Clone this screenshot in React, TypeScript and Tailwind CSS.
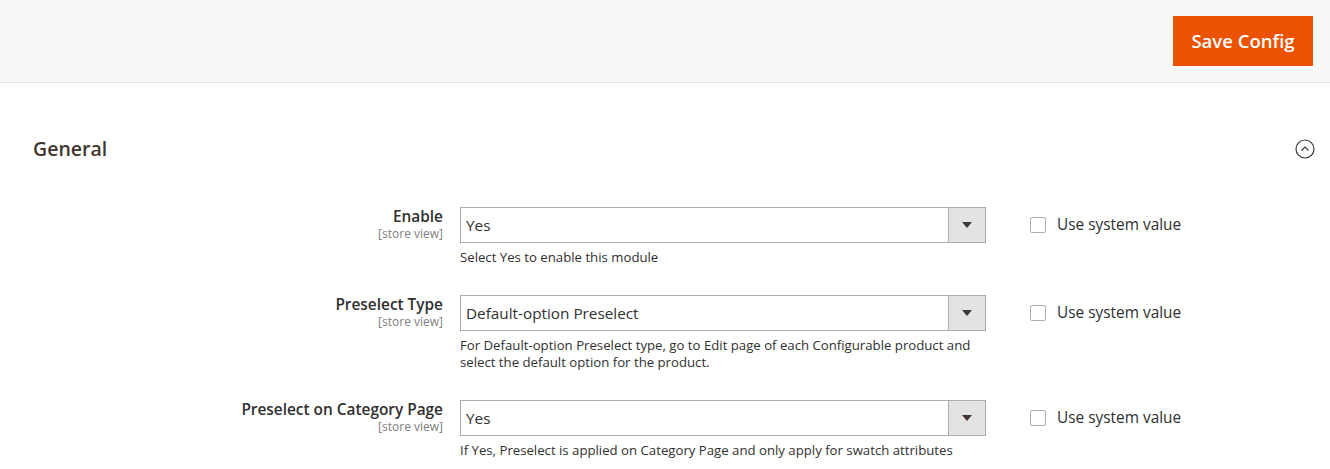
import React from 'react';

type Row = {
  label: string;
  value: string;
  note: string[];
};

const rows: Row[] = [
  { label: 'Enable', value: 'Yes', note: ['Select Yes to enable this module'] },
  {
    label: 'Preselect Type',
    value: 'Default-option Preselect',
    note: [
      'For Default-option Preselect type, go to Edit page of each Configurable product and',
      'select the default option for the product.',
    ],
  },
  {
    label: 'Preselect on Category Page',
    value: 'Yes',
    note: ['If Yes, Preselect is applied on Category Page and only apply for swatch attributes'],
  },
];

const ConfigRow: React.FC<{ row: Row }> = ({ row }) => (
  <div className="flex items-start mb-[29px]">
    <div className="w-[443px] shrink-0 text-right">
      <div className="text-[15.4px] font-semibold text-[#303030] leading-[20px]">{row.label}</div>
      <div className="text-[12px] text-[#808080] leading-[13px]">[store view]</div>
    </div>
    <div className="ml-[17px] w-[526px] shrink-0">
      <div className="flex h-[36px] border border-[#adadad] bg-white">
        <div className="flex-1 flex items-center pl-[5px] text-[15.3px] text-[#303030]">{row.value}</div>
        <div className="w-[37px] border-l border-[#adadad] bg-[#e3e3e3] flex items-center justify-center">
          <svg width="10" height="6" viewBox="0 0 10 6">
            <path d="M0 0 L10 0 L5 6 Z" fill="#41362f" />
          </svg>
        </div>
      </div>
      <div className="mt-[6px] text-[13.2px] leading-[17px] text-[#303030]">
        {row.note.map((n) => (
          <div key={n}>{n}</div>
        ))}
      </div>
    </div>
    <label className="ml-[44px] mt-[9px] flex items-center">
      <span className="w-[16px] h-[16px] border border-[#adadad] rounded-[2px] bg-white" />
      <span className="ml-[11px] text-[15.4px] text-[#303030] leading-[18px]">Use system value</span>
    </label>
  </div>
);

const App: React.FC = () => {
  return (
    <div className="min-h-[469px] bg-white" style={{ fontFamily: '"Open Sans", "Noto Sans", sans-serif' }}>
      <div className="h-[83px] bg-[#f8f8f8] border-b border-[#e3e3e3] flex items-start justify-end pr-[17px] pt-[16px]">
        <button className="w-[140px] h-[50px] bg-[#eb5202] text-white text-[18.5px] font-semibold">Save Config</button>
      </div>
      <div className="flex items-center justify-between pl-[33px] pr-[15px] mt-[51px] h-[30px]">
        <h2 className="text-[19.5px] font-semibold text-[#41362f]">General</h2>
        <svg width="20" height="20" viewBox="0 0 20 20">
          <circle cx="10" cy="10" r="9" fill="none" stroke="#41362f" strokeWidth="1.2" />
          <path d="M6.5 11.5 L10 8 L13.5 11.5" fill="none" stroke="#41362f" strokeWidth="1.2" />
        </svg>
      </div>
      <div className="mt-[43px]">
        {rows.map((r) => (
          <ConfigRow key={r.label} row={r} />
        ))}
      </div>
    </div>
  );
};

export default App;
